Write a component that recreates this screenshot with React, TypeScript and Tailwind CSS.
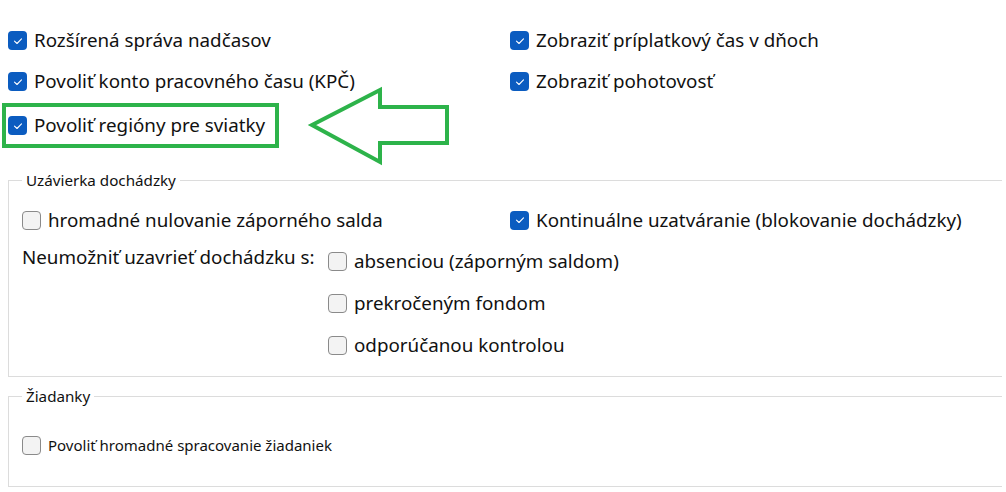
import React from "react";

function Box({ checked }: { checked?: boolean }) {
  if (checked) {
    return (
      <span className="flex h-[19px] w-[19px] shrink-0 items-center justify-center rounded-[4px] bg-[#0b5cc0]">
        <svg width="12" height="12" viewBox="0 0 12 12" fill="none">
          <path d="M2.5 6.2 5 8.5 9.5 3.8" stroke="#fff" strokeWidth="1.1" strokeLinecap="round" strokeLinejoin="round" />
        </svg>
      </span>
    );
  }
  return <span className="h-[19px] w-[19px] shrink-0 rounded-[4px] border border-[#8a8a8a] bg-[#f3f3f3]" />;
}

function Check({ label, checked, small }: { label: string; checked?: boolean; small?: boolean }) {
  return (
    <div className="flex items-center gap-[7px]">
      <Box checked={checked} />
      <span className={small ? "text-[15px]" : "text-[18.8px]"}>{label}</span>
    </div>
  );
}

export default function App() {
  return (
    <div
      className="relative h-[492px] w-[1006px] overflow-hidden bg-white text-[#111]"
      style={{ fontFamily: '"Noto Sans", "DejaVu Sans", sans-serif' }}
    >
      <div className="grid grid-cols-[502px_1fr] pt-[20px]">
        <div>
          <div className="flex h-[41px] items-center pl-[8px]">
            <Check checked label="Rozšírená správa nadčasov" />
          </div>
          <div className="flex h-[41px] items-center pl-[8px]">
            <Check checked label="Povoliť konto pracovného času (KPČ)" />
          </div>
          <div className="ml-[2px] mt-[1px] flex h-[45px] w-[277px] items-center border-4 border-[#2db34a] pl-[2px]">
            <Check checked label="Povoliť regióny pre sviatky" />
          </div>
        </div>
        <div>
          <div className="flex h-[41px] items-center pl-[8px]">
            <Check checked label="Zobraziť príplatkový čas v dňoch" />
          </div>
          <div className="flex h-[41px] items-center pl-[8px]">
            <Check checked label="Zobraziť pohotovosť" />
          </div>
        </div>
      </div>

      <svg className="absolute left-[306px] top-[86px]" width="146" height="80" viewBox="0 0 146 80" fill="none">
        <path d="M6 39 74 4 74 21 141 21 141 57 74 57 74 76Z" stroke="#2db34a" strokeWidth="4" strokeLinejoin="miter" />
      </svg>

      <fieldset className="ml-[8px] mt-[22px] w-[994px] border border-r-0 border-[#dcdcdc] pb-[10px] pl-[13px]">
        <legend className="px-[4px] text-[15.2px] leading-[20px]">Uzávierka dochádzky</legend>
        <div className="grid grid-cols-[488px_1fr] pt-[10px]">
          <div className="flex h-[40px] items-center">
            <Check label="hromadné nulovanie záporného salda" />
          </div>
          <div className="flex h-[40px] items-center">
            <Check checked label="Kontinuálne uzatváranie (blokovanie dochádzky)" />
          </div>
        </div>
        <div className="flex">
          <div className="w-[306px] pt-[4px] text-[18.8px] leading-[26px]">Neumožniť uzavrieť dochádzku s:</div>
          <div>
            <div className="flex h-[42px] items-center">
              <Check label="absenciou (záporným saldom)" />
            </div>
            <div className="flex h-[42px] items-center">
              <Check label="prekročeným fondom" />
            </div>
            <div className="flex h-[42px] items-center">
              <Check label="odporúčanou kontrolou" />
            </div>
          </div>
        </div>
      </fieldset>

      <fieldset className="ml-[8px] mt-[9px] w-[994px] border border-r-0 border-[#dcdcdc] pb-[26px] pl-[13px] pt-[24px]">
        <legend className="px-[4px] text-[15.2px] leading-[20px]">Žiadanky</legend>
        <div className="flex h-[30px] items-center">
          <Check small label="Povoliť hromadné spracovanie žiadaniek" />
        </div>
      </fieldset>
    </div>
  );
}
